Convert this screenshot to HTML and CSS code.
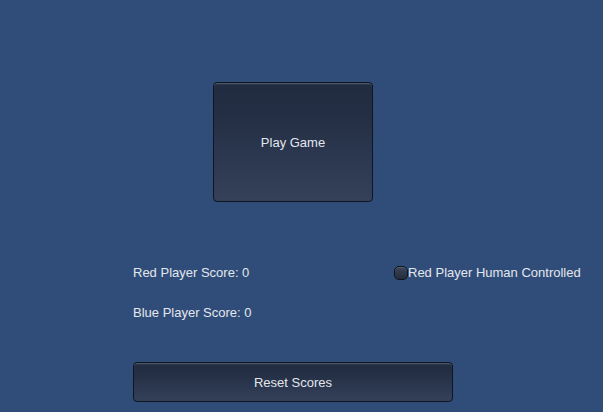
FILE: index.html
```html
<!DOCTYPE html>
<html>
<head>
<meta charset="utf-8">
<link rel="stylesheet" href="styles.css">
</head>
<body>
<div class="stage">
  <div class="btn play">Play Game</div>
  <div class="scores">
    <div class="row">
      <span class="label">Red Player Score: 0</span>
      <span class="toggle"><span class="box"></span><span class="tlabel">Red Player Human Controlled</span></span>
    </div>
    <div class="row">
      <span class="label">Blue Player Score: 0</span>
    </div>
  </div>
  <div class="btn reset">Reset Scores</div>
</div>
</body>
</html>
```
FILE: styles.css
```css
html, body {
  margin: 0;
  padding: 0;
  background: #304d7a;
  width: 603px;
  height: 412px;
  overflow: hidden;
}
.stage {
  display: flex;
  flex-direction: column;
  align-items: flex-start;
  padding: 82px 0 0 133px;
  font-family: "Liberation Sans", Arial, sans-serif;
  font-size: 13px;
  color: #e4e7ec;
}
.btn {
  box-sizing: border-box;
  display: flex;
  align-items: center;
  justify-content: center;
  padding-top: 1px;
  border: 1px solid #10151f;
  border-radius: 4px;
  background: linear-gradient(#212b40 0%, #232e44 25%, #2f3b53 75%, #344159 100%);
  box-shadow: inset 0 1px 0 #4a5568, inset 0 2px 0 #2e384c;
  color: #e2e6ec;
}
.play {
  margin-left: 80px;
  width: 160px;
  height: 120px;
}
.scores {
  display: flex;
  flex-direction: column;
  gap: 20px;
  margin-top: 60px;
}
.row {
  box-sizing: border-box;
  display: flex;
  align-items: center;
  height: 20px;
  padding-top: 1px;
}
.label {
  width: 261px;
}
.toggle {
  display: flex;
  align-items: center;
}
.box {
  box-sizing: border-box;
  width: 14px;
  height: 14px;
  border: 1px solid #0f141d;
  border-radius: 5px;
  background: linear-gradient(#3b4559, #242d3d);
  box-shadow: inset 0 1px 0 #555f70;
}
.tlabel {
  margin-left: 0;
}
.reset {
  margin-top: 40px;
  width: 320px;
  height: 40px;
}
```
